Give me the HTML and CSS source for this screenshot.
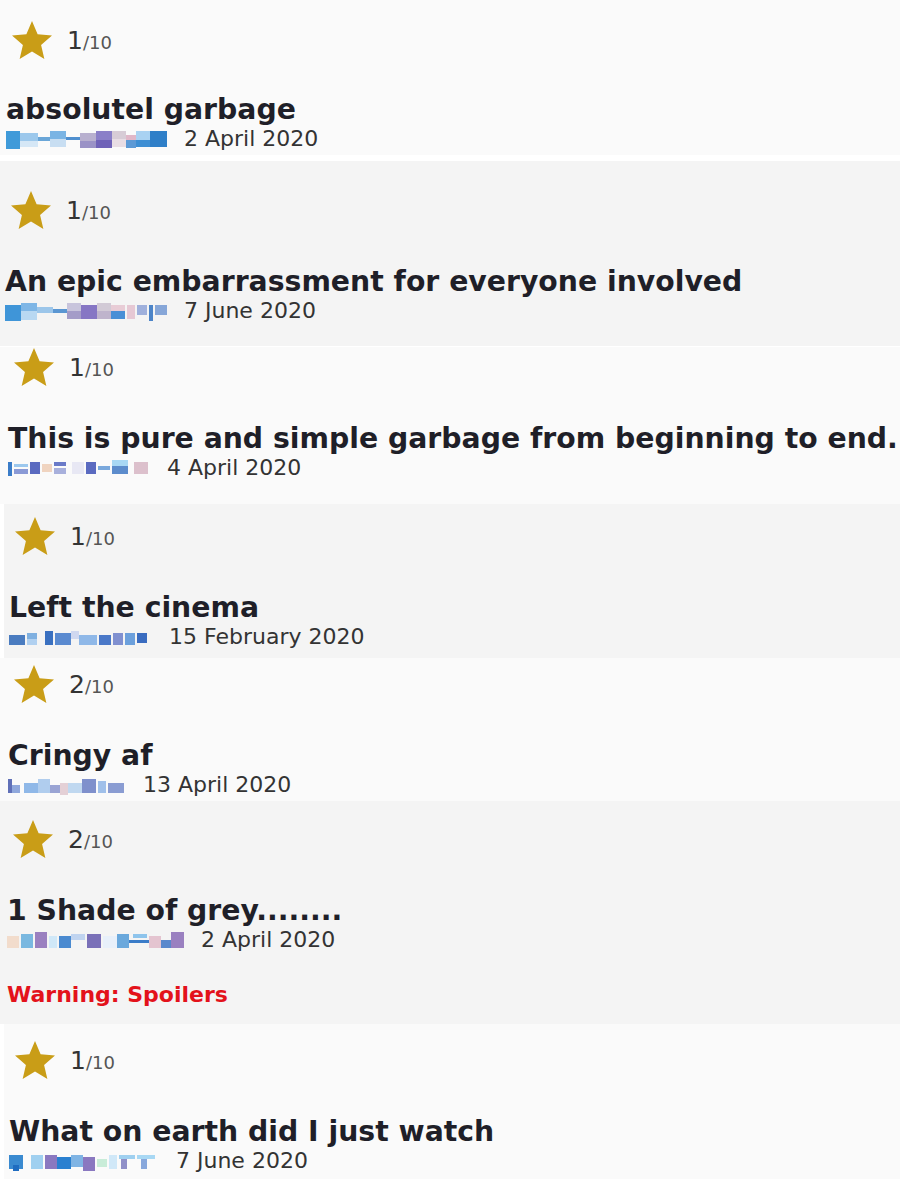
FILE: index.html
```html
<html>
<head>
  <title>User reviews</title>
  <link rel="stylesheet" href="styles.css">
</head>
<body>
  <div class="reviews">

    <div class="review">
      <div class="rating">
        <svg class="star" viewBox="2 2 20 19"><path d="M12 17.27L18.18 21l-1.64-7.03L22 9.24l-7.19-.61L12 2 9.19 8.63 2 9.24l5.46 4.73L5.82 21z"/></svg>
        <span class="score">1<small>/10</small></span>
      </div>
      <div class="title">absolutel garbage</div>
      <div class="meta">
        <svg class="author" width="161" height="20">
          <rect x="0" y="2" width="14" height="18" fill="#3f9ad9"/>
          <rect x="14" y="4" width="18" height="8" fill="#9cc8ec"/>
          <rect x="14" y="12" width="18" height="6" fill="#d5e7f6"/>
          <rect x="32" y="8" width="12" height="4" fill="#6aa6d8"/>
          <rect x="44" y="2" width="16" height="8" fill="#7ab4e4"/>
          <rect x="44" y="10" width="16" height="8" fill="#c8def2"/>
          <rect x="60" y="8" width="14" height="3" fill="#4f8fcf"/>
          <rect x="74" y="4" width="16" height="8" fill="#b8b0cf"/>
          <rect x="74" y="12" width="16" height="7" fill="#9a92c6"/>
          <rect x="90" y="2" width="16" height="9" fill="#8a7fc8"/>
          <rect x="90" y="11" width="16" height="8" fill="#6f62b8"/>
          <rect x="106" y="2" width="14" height="8" fill="#d7ccd6"/>
          <rect x="106" y="10" width="14" height="8" fill="#e8dde4"/>
          <rect x="120" y="6" width="10" height="5" fill="#e0b7c8"/>
          <rect x="120" y="11" width="10" height="8" fill="#5d9ad6"/>
          <rect x="130" y="2" width="14" height="9" fill="#a9d2f2"/>
          <rect x="130" y="11" width="14" height="7" fill="#3e8fd4"/>
          <rect x="144" y="2" width="17" height="16" fill="#2f7fc8"/>
        </svg>
        <span class="date">2 April 2020</span>
      </div>
    </div>

    <div class="review shaded">
      <div class="rating">
        <svg class="star" viewBox="2 2 20 19"><path d="M12 17.27L18.18 21l-1.64-7.03L22 9.24l-7.19-.61L12 2 9.19 8.63 2 9.24l5.46 4.73L5.82 21z"/></svg>
        <span class="score">1<small>/10</small></span>
      </div>
      <div class="title">An epic embarrassment for everyone involved</div>
      <div class="meta">
        <svg class="author" width="162" height="20">
          <rect x="0" y="4" width="16" height="16" fill="#3f95d8"/>
          <rect x="16" y="2" width="16" height="8" fill="#7eb6e6"/>
          <rect x="16" y="10" width="16" height="9" fill="#b8d8f2"/>
          <rect x="32" y="6" width="16" height="6" fill="#9cc6ea"/>
          <rect x="48" y="8" width="14" height="4" fill="#5a96d2"/>
          <rect x="62" y="2" width="14" height="8" fill="#c8c4dc"/>
          <rect x="62" y="10" width="14" height="8" fill="#a49cc8"/>
          <rect x="76" y="4" width="16" height="14" fill="#8676c4"/>
          <rect x="92" y="2" width="14" height="8" fill="#d2cad6"/>
          <rect x="92" y="10" width="14" height="8" fill="#bfb4cc"/>
          <rect x="106" y="4" width="14" height="6" fill="#e8ccd6"/>
          <rect x="106" y="10" width="14" height="8" fill="#4a8fd6"/>
          <rect x="122" y="4" width="8" height="14" fill="#e6c8d4"/>
          <rect x="132" y="4" width="10" height="10" fill="#9fb0dc"/>
          <rect x="144" y="4" width="4" height="16" fill="#4c84c8"/>
          <rect x="150" y="4" width="12" height="10" fill="#86a6d8"/>
        </svg>
        <span class="date">7 June 2020</span>
      </div>
    </div>

    <div class="review">
      <div class="rating">
        <svg class="star" viewBox="2 2 20 19"><path d="M12 17.27L18.18 21l-1.64-7.03L22 9.24l-7.19-.61L12 2 9.19 8.63 2 9.24l5.46 4.73L5.82 21z"/></svg>
        <span class="score">1<small>/10</small></span>
      </div>
      <div class="title">This is pure and simple garbage from beginning to end.</div>
      <div class="meta">
        <svg class="author" width="142" height="20">
          <rect x="0" y="4" width="4" height="14" fill="#3a7cc8"/>
          <rect x="6" y="6" width="14" height="3" fill="#9cc8ee"/>
          <rect x="6" y="11" width="14" height="5" fill="#8a9ad6"/>
          <rect x="22" y="4" width="10" height="12" fill="#5a6ac0"/>
          <rect x="34" y="6" width="10" height="8" fill="#f0d4c0"/>
          <rect x="46" y="4" width="12" height="4" fill="#6a7ac8"/>
          <rect x="46" y="10" width="12" height="6" fill="#a8b0dc"/>
          <rect x="64" y="4" width="12" height="12" fill="#e8e8f4"/>
          <rect x="78" y="4" width="10" height="12" fill="#5a6ac0"/>
          <rect x="90" y="8" width="12" height="4" fill="#7aa8dc"/>
          <rect x="104" y="2" width="16" height="6" fill="#a8d8f4"/>
          <rect x="104" y="8" width="16" height="8" fill="#5c8ccc"/>
          <rect x="126" y="4" width="14" height="12" fill="#dcc0cc"/>
        </svg>
        <span class="date">4 April 2020</span>
      </div>
    </div>

    <div class="review shaded">
      <div class="rating">
        <svg class="star" viewBox="2 2 20 19"><path d="M12 17.27L18.18 21l-1.64-7.03L22 9.24l-7.19-.61L12 2 9.19 8.63 2 9.24l5.46 4.73L5.82 21z"/></svg>
        <span class="score">1<small>/10</small></span>
      </div>
      <div class="title">Left the cinema</div>
      <div class="meta">
        <svg class="author" width="143" height="20">
          <rect x="0" y="8" width="16" height="10" fill="#4a7cc0"/>
          <rect x="18" y="6" width="10" height="6" fill="#7fb0e0"/>
          <rect x="18" y="12" width="10" height="6" fill="#b0d0f0"/>
          <rect x="36" y="4" width="8" height="14" fill="#3a70c0"/>
          <rect x="46" y="6" width="16" height="12" fill="#5a8ad0"/>
          <rect x="62" y="4" width="8" height="8" fill="#d0d8f0"/>
          <rect x="70" y="8" width="18" height="10" fill="#8fb8e8"/>
          <rect x="90" y="8" width="12" height="10" fill="#4a78c8"/>
          <rect x="104" y="6" width="10" height="12" fill="#8090d0"/>
          <rect x="116" y="6" width="10" height="12" fill="#6ca0dc"/>
          <rect x="128" y="6" width="10" height="10" fill="#3a6cc0"/>
        </svg>
        <span class="date">15 February 2020</span>
      </div>
    </div>

    <div class="review">
      <div class="rating">
        <svg class="star" viewBox="2 2 20 19"><path d="M12 17.27L18.18 21l-1.64-7.03L22 9.24l-7.19-.61L12 2 9.19 8.63 2 9.24l5.46 4.73L5.82 21z"/></svg>
        <span class="score">2<small>/10</small></span>
      </div>
      <div class="title">Cringy af</div>
      <div class="meta">
        <svg class="author" width="118" height="20">
          <rect x="0" y="4" width="4" height="14" fill="#6070b8"/>
          <rect x="4" y="10" width="8" height="8" fill="#90a8dc"/>
          <rect x="16" y="8" width="14" height="10" fill="#8fb8e8"/>
          <rect x="30" y="4" width="12" height="14" fill="#b0cdee"/>
          <rect x="42" y="10" width="10" height="8" fill="#9aa4d4"/>
          <rect x="52" y="8" width="8" height="14" fill="#e4d0d6"/>
          <rect x="60" y="8" width="14" height="10" fill="#c0d8f0"/>
          <rect x="74" y="4" width="14" height="14" fill="#7f90cc"/>
          <rect x="90" y="6" width="8" height="12" fill="#a0c0ea"/>
          <rect x="100" y="8" width="16" height="10" fill="#8a9cd2"/>
        </svg>
        <span class="date">13 April 2020</span>
      </div>
    </div>

    <div class="review shaded">
      <div class="rating">
        <svg class="star" viewBox="2 2 20 19"><path d="M12 17.27L18.18 21l-1.64-7.03L22 9.24l-7.19-.61L12 2 9.19 8.63 2 9.24l5.46 4.73L5.82 21z"/></svg>
        <span class="score">2<small>/10</small></span>
      </div>
      <div class="title">1 Shade of grey........</div>
      <div class="meta">
        <svg class="author" width="177" height="20">
          <rect x="0" y="6" width="12" height="12" fill="#f2dccc"/>
          <rect x="14" y="4" width="12" height="14" fill="#7ab8e0"/>
          <rect x="28" y="2" width="12" height="16" fill="#9a80c0"/>
          <rect x="42" y="6" width="8" height="12" fill="#d0e8f8"/>
          <rect x="52" y="6" width="12" height="12" fill="#4a8ad0"/>
          <rect x="64" y="4" width="14" height="6" fill="#c0d4f0"/>
          <rect x="80" y="4" width="14" height="14" fill="#7a70b8"/>
          <rect x="96" y="6" width="14" height="12" fill="#e8f0fa"/>
          <rect x="110" y="4" width="12" height="14" fill="#6aa8dc"/>
          <rect x="122" y="10" width="20" height="3" fill="#3a7cc8"/>
          <rect x="126" y="4" width="14" height="4" fill="#8ec4ec"/>
          <rect x="142" y="6" width="12" height="12" fill="#e4c4d0"/>
          <rect x="154" y="10" width="10" height="8" fill="#5a88cc"/>
          <rect x="164" y="2" width="13" height="16" fill="#9a80c0"/>
        </svg>
        <span class="date">2 April 2020</span>
      </div>
      <div class="spoiler">Warning: Spoilers</div>
    </div>

    <div class="review">
      <div class="rating">
        <svg class="star" viewBox="2 2 20 19"><path d="M12 17.27L18.18 21l-1.64-7.03L22 9.24l-7.19-.61L12 2 9.19 8.63 2 9.24l5.46 4.73L5.82 21z"/></svg>
        <span class="score">1<small>/10</small></span>
      </div>
      <div class="title">What on earth did I just watch</div>
      <div class="meta">
        <svg class="author" width="150" height="20">
          <rect x="0" y="4" width="14" height="14" fill="#3a8ad0"/>
          <rect x="4" y="14" width="6" height="6" fill="#1f6cc0"/>
          <rect x="22" y="4" width="12" height="14" fill="#a0d0f0"/>
          <rect x="36" y="4" width="12" height="14" fill="#8a78c0"/>
          <rect x="48" y="6" width="14" height="12" fill="#2a80d0"/>
          <rect x="62" y="4" width="12" height="12" fill="#7fb4e4"/>
          <rect x="74" y="6" width="12" height="14" fill="#8a78c0"/>
          <rect x="88" y="8" width="10" height="8" fill="#c8ecd8"/>
          <rect x="100" y="4" width="8" height="14" fill="#d0e8f8"/>
          <rect x="110" y="4" width="16" height="4" fill="#9fd0f0"/>
          <rect x="112" y="8" width="6" height="10" fill="#9090c8"/>
          <rect x="128" y="4" width="18" height="4" fill="#a8d8f4"/>
          <rect x="132" y="8" width="6" height="10" fill="#88a8dc"/>
        </svg>
        <span class="date">7 June 2020</span>
      </div>
    </div>

  </div>
</body>
</html>
```

FILE: styles.css
```css
body {
  margin: 0;
  background-color: #fff;
  color: #222;
  font-family: "DejaVu Sans", Verdana, sans-serif;
}

.reviews {
  display: flex;
  flex-direction: column;
}

.review {
  background-color: #fafafa;
}

.review.shaded {
  background-color: #f4f4f4;
}

/* each card came from its own screenshot, so the spacing drifts a bit */
.review:nth-child(1) { padding: 21px 0 3px 6px; margin-bottom: 6px; }
.review:nth-child(1) .title { margin-top: 35px; }
.review:nth-child(2) { padding: 30px 0 22px 5px; margin-bottom: 1px; }
.review:nth-child(3) { padding: 1px 0 23px 8px; }
.review:nth-child(4) { padding: 13px 0 8px 5px; margin-left: 4px; }
.review:nth-child(5) { padding: 7px 0 3px 8px; }
.review:nth-child(6) { padding: 19px 0 16px 7px; }
.review:nth-child(7) { padding: 17px 0 20px 5px; margin-left: 4px; }

.rating {
  display: flex;
  align-items: center;
  height: 38px;
  padding-left: 6px;
}

.star {
  width: 40px;
  height: 38px;
  fill: #c99d17;
  margin-right: 15px;
}

.score {
  font-size: 25px;
  color: #333;
}

.score small {
  font-size: 18px;
  color: #555;
}

.title {
  margin-top: 37px;
  font-size: 28.3px;
  line-height: 32px;
  font-weight: bold;
  color: #1f1f28;
}

.meta {
  display: flex;
  align-items: center;
  gap: 17px;
  height: 26px;
}

.author {
  display: block;
}

.date {
  font-size: 22px;
  line-height: 26px;
  color: #333;
}

.spoiler {
  margin-top: 29px;
  font-size: 22px;
  line-height: 26px;
  font-weight: bold;
  color: #e3121b;
}
```
